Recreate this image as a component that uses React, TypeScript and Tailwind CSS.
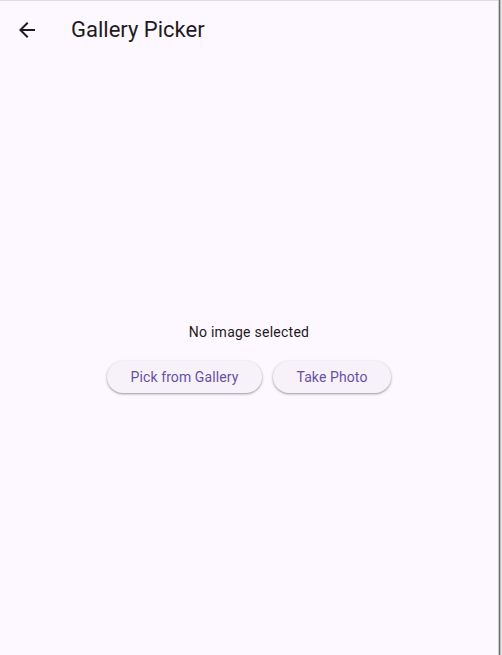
import React from "react";

export default function App() {
  return (
    <div className="flex h-[655px] w-[502px] overflow-hidden bg-[#fdf7ff]" style={{ fontFamily: "Roboto, 'Noto Sans', sans-serif" }}>
      <div className="flex h-full w-[498px] flex-col border-t border-[#dedede]">
        <header className="flex h-[58px] items-center">
          <div className="flex w-[54px] items-center justify-center">
            <svg width="24" height="24" viewBox="0 0 24 24" fill="#1d1b20">
              <path d="M20 11H7.83l5.59-5.59L12 4l-8 8 8 8 1.41-1.41L7.83 13H20v-2z" />
            </svg>
          </div>
          <h1 className="ml-[17px] text-[22px] leading-[28px] text-[#1d1b20]">Gallery Picker</h1>
        </header>
        <main className="flex flex-1 flex-col items-center justify-center">
          <p className="mt-[1px] text-[14px] leading-[20px] tracking-[0.25px] text-[#1d1b20]">No image selected</p>
          <div className="mt-[19px] flex gap-[11px]">
            <button className="h-[32px] rounded-full bg-[#f7f2fa] px-[23.5px] text-[14px] font-normal tracking-[0.1px] text-[#6750a4] shadow-[0_1px_2px_rgba(0,0,0,0.3),0_1px_3px_1px_rgba(0,0,0,0.08)]">
              Pick from Gallery
            </button>
            <button className="h-[32px] rounded-full bg-[#f7f2fa] px-[23.5px] text-[14px] font-normal tracking-[0.1px] text-[#6750a4] shadow-[0_1px_2px_rgba(0,0,0,0.3),0_1px_3px_1px_rgba(0,0,0,0.08)]">
              Take Photo
            </button>
          </div>
        </main>
      </div>
      <div className="h-full w-[1px] bg-[#c8c8c8]" />
      <div className="h-full w-[1px] bg-[#6e6e6e]" />
      <div className="h-full w-[1px] bg-[#bcbcbc]" />
      <div className="h-full w-[1px] bg-[#e8e8e8]" />
    </div>
  );
}
